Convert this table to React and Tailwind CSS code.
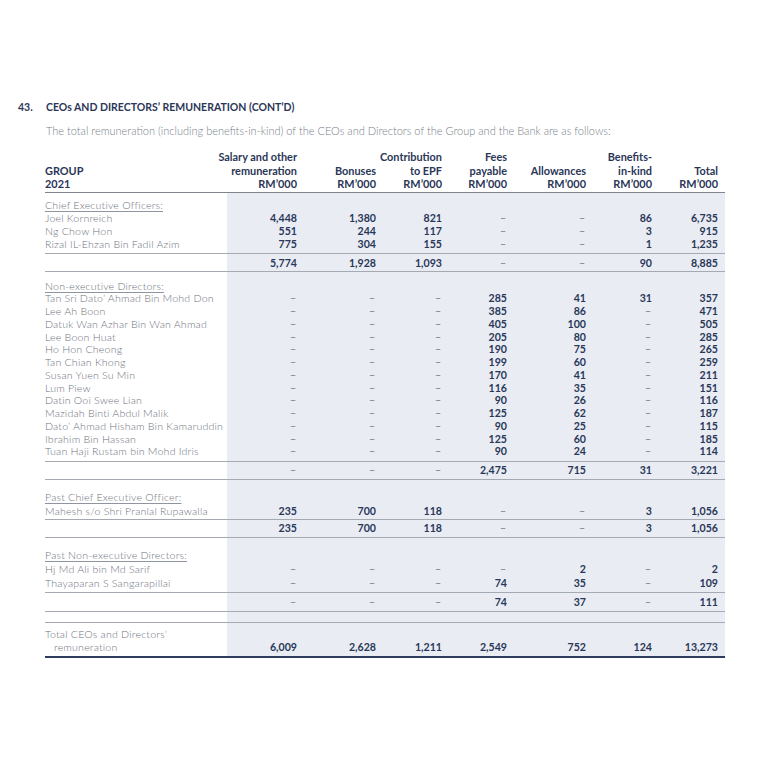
import React from "react";

const GRID = "grid grid-cols-[182px_70px_79px_66px_65px_79px_66px_66px_7px] items-center";
const D = "–";

function Num({ v }) {
  if (v === D) {
    return (
      <div className="text-right pr-[1px] leading-[12px] text-[#8d93a0] font-bold text-[10.5px]">
        {D}
      </div>
    );
  }
  return (
    <div className="text-right leading-[12px] text-[#2a3759] font-bold text-[10.6px]">
      {v}
    </div>
  );
}

function Row({ label, vals, h, heading, indent }) {
  return (
    <div className={`${GRID} ${h}`}>
      <div
        className={
          heading
            ? "whitespace-nowrap leading-[12px] text-[10.6px] tracking-[0.2px] font-light text-[#6f7480] underline decoration-[#8f95a0] underline-offset-2"
            : indent
            ? "whitespace-nowrap leading-[12px] text-[10.6px] tracking-[0.2px] font-light text-[#6f7480] pl-[9px]"
            : "whitespace-nowrap leading-[12px] text-[10.6px] tracking-[0.2px] font-light text-[#6f7480]"
        }
      >
        {label}
      </div>
      {vals ? vals.map((v, i) => <Num key={i} v={v} />) : null}
    </div>
  );
}

function Sub({ vals }) {
  return (
    <div className={`${GRID} h-[19px] border-y border-[#a5aab2]`}>
      <div />
      {vals.map((v, i) => (
        <Num key={i} v={v} />
      ))}
    </div>
  );
}

const header = [
  ["Salary and other", "remuneration", "RM’000"],
  ["", "Bonuses", "RM’000"],
  ["Contribution", "to EPF", "RM’000"],
  ["Fees", "payable", "RM’000"],
  ["", "Allowances", "RM’000"],
  ["Benefits-", "in-kind", "RM’000"],
  ["", "Total", "RM’000"],
];

const ceo = [
  ["Joel Kornreich", ["4,448", "1,380", "821", D, D, "86", "6,735"]],
  ["Ng Chow Hon", ["551", "244", "117", D, D, "3", "915"]],
  ["Rizal IL-Ehzan Bin Fadil Azim", ["775", "304", "155", D, D, "1", "1,235"]],
];

const ned = [
  ["Tan Sri Dato’ Ahmad Bin Mohd Don", [D, D, D, "285", "41", "31", "357"]],
  ["Lee Ah Boon", [D, D, D, "385", "86", D, "471"]],
  ["Datuk Wan Azhar Bin Wan Ahmad", [D, D, D, "405", "100", D, "505"]],
  ["Lee Boon Huat", [D, D, D, "205", "80", D, "285"]],
  ["Ho Hon Cheong", [D, D, D, "190", "75", D, "265"]],
  ["Tan Chian Khong", [D, D, D, "199", "60", D, "259"]],
  ["Susan Yuen Su Min", [D, D, D, "170", "41", D, "211"]],
  ["Lum Piew", [D, D, D, "116", "35", D, "151"]],
  ["Datin Ooi Swee Lian", [D, D, D, "90", "26", D, "116"]],
  ["Mazidah Binti Abdul Malik", [D, D, D, "125", "62", D, "187"]],
  ["Dato’ Ahmad Hisham Bin Kamaruddin", [D, D, D, "90", "25", D, "115"]],
  ["Ibrahim Bin Hassan", [D, D, D, "125", "60", D, "185"]],
  ["Tuan Haji Rustam bin Mohd Idris", [D, D, D, "90", "24", D, "114"]],
];

export default function App() {
  return (
    <div className="w-[768px] h-[768px] bg-white font-['Lato',sans-serif] pt-[101px]">
      <div className="flex items-center h-[14px] text-[10.5px] font-bold text-[#2b3657]">
        <div className="w-[46px] pl-[18px]">43.</div>
        <div>CEOs AND DIRECTORS’ REMUNERATION (CONT’D)</div>
      </div>
      <div className="mt-[9px] pl-[46px] h-[14px] leading-[14px] text-[11px] font-light text-[#7a7f8a]">
        The total remuneration (including benefits-in-kind) of the CEOs and Directors of the Group and the Bank are as follows:
      </div>

      <div className="ml-[45px] w-[680px] mt-[12px]">
        {/* header */}
        <div className={`${GRID} items-end pb-[1.5px] border-b-[1.5px] border-[#7f848d] text-[10.9px] font-bold text-[#2b3657]`}>
          <div className="flex flex-col">
            <div className="h-[13.5px] leading-[13.5px]">&nbsp;</div>
            <div className="h-[13.5px] leading-[13.5px]">GROUP</div>
            <div className="h-[13.5px] leading-[13.5px]">2021</div>
          </div>
          {header.map((c, i) => (
            <div key={i} className="flex flex-col">
              {c.map((t, j) => (
                <div key={j} className="flex justify-end whitespace-nowrap h-[13.5px] leading-[13.5px]">
                  {t || "\u00a0"}
                </div>
              ))}
            </div>
          ))}
          <div />
        </div>

        {/* body */}
        <div className="bg-[linear-gradient(to_right,transparent_182px,#e9edf3_182px)]">
          <div className="pt-[5px] pb-[3px]">
            <Row label="Chief Executive Officers:" heading h="h-[13px]" />
            {ceo.map(([n, v]) => (
              <Row key={n} label={n} vals={v} h="h-[13px]" />
            ))}
          </div>
          <Sub vals={["5,774", "1,928", "1,093", D, D, "90", "8,885"]} />

          <div className="pt-[7px] pb-[3px]">
            <Row label="Non-executive Directors:" heading h="h-[13px]" />
            {ned.map(([n, v]) => (
              <Row key={n} label={n} vals={v} h="h-[12.75px]" />
            ))}
          </div>
          <Sub vals={[D, D, D, "2,475", "715", "31", "3,221"]} />

          <div className="pt-[10px] pb-[1px]">
            <Row label="Past Chief Executive Officer:" heading h="h-[14px]" />
            <Row
              label="Mahesh s/o Shri Pranlal Rupawalla"
              vals={["235", "700", "118", D, D, "3", "1,056"]}
              h="h-[14px]"
            />
          </div>
          <Sub vals={["235", "700", "118", D, D, "3", "1,056"]} />

          <div className="pt-[10px] pb-[2px]">
            <Row label="Past Non-executive Directors:" heading h="h-[14px]" />
            <Row label="Hj Md Ali bin Md Sarif" vals={[D, D, D, D, "2", D, "2"]} h="h-[14px]" />
            <Row label="Thayaparan S Sangarapillai" vals={[D, D, D, "74", "35", D, "109"]} h="h-[14px]" />
          </div>
          <div className={`${GRID} h-[19px] border-t border-[#a5aab2]`}>
            <div />
            {[D, D, D, "74", "37", D, "111"].map((v, i) => (
              <Num key={i} v={v} />
            ))}
          </div>
          <div className="h-[12px] border-y border-[#a5aab2]" />

          <div className="pt-[5px] pb-[2px] border-b-2 border-[#2f3c5e]">
            <Row label="Total CEOs and Directors’" h="h-[13px]" />
            <Row
              label="remuneration"
              indent
              vals={["6,009", "2,628", "1,211", "2,549", "752", "124", "13,273"]}
              h="h-[13px]"
            />
          </div>
        </div>
      </div>
    </div>
  );
}
